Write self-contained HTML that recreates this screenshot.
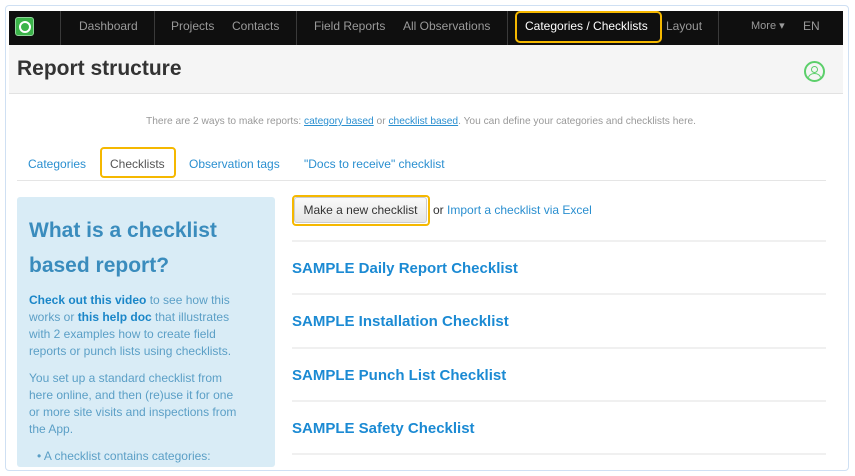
<!DOCTYPE html>
<html><head><meta charset="utf-8"><style>
*{margin:0;padding:0;box-sizing:border-box}
body{width:855px;height:476px;background:#fff;font-family:"Liberation Sans",Arial,sans-serif;position:relative;overflow:hidden}
.frame{position:absolute;left:5px;top:5px;width:844px;height:466px;border:1.5px solid #cfe0f3;border-radius:4px}
.nav{position:absolute;left:9px;top:11px;width:834px;height:34px;background:#0f0f0f}
.nav span{position:absolute;top:8px;font-size:12px;color:#9a9a9a}
.sep{position:absolute;top:0;width:1px;height:34px;background:#3a3a3a}
.hdr{position:absolute;left:9px;top:45px;width:834px;height:49px;background:#f5f5f5;border-bottom:1px solid #e2e2e2}
.a{position:absolute;white-space:nowrap}
.tab{position:absolute;top:157px;font-size:12px;color:#2a8fd0}
.panel{position:absolute;left:17px;top:197px;width:258px;height:270px;background:#d9ecf6;border-radius:3px}
.panel p{font-size:12px;line-height:17px;color:#5b9fc6}
.panel b{color:#1a86c8}
.li{position:absolute;left:292px;font-size:15px;font-weight:bold;color:#1b8ad3}
.hr{position:absolute;left:292px;width:534px;height:2px;background:#f0f0f0}
.y{border:2px solid #f5b800;border-radius:4px;position:absolute}
</style></head><body>
<div class="frame"></div>
<div class="nav">
<div style="position:absolute;left:6px;top:6px;width:19px;height:19px;background:#3cb44a;border-radius:3px;border:1px solid #8fd69a"><div style="position:absolute;left:2.5px;top:2.5px;width:12px;height:12px;border:2px solid #fff;border-radius:50%"></div></div>
<div class="sep" style="left:51px"></div><div class="sep" style="left:145px"></div><div class="sep" style="left:287px"></div><div class="sep" style="left:498px"></div><div class="sep" style="left:709px"></div>
<span style="left:70px">Dashboard</span>
<span style="left:162px">Projects</span>
<span style="left:223px">Contacts</span>
<span style="left:305px">Field Reports</span>
<span style="left:394px">All Observations</span>
<span style="left:516px;color:#fff">Categories / Checklists</span>
<span style="left:657px">Layout</span>
<span style="left:742px;font-size:11px;top:8px">More ▾</span>
<span style="left:794px;font-size:12px">EN</span>
</div>
<div class="y" style="left:515px;top:11px;width:147px;height:32px;border-radius:5px"></div>
<div class="hdr">
<div class="a" style="left:8px;top:12px;font-size:21px;font-weight:bold;color:#333">Report structure</div>
<div style="position:absolute;left:795px;top:16px;width:21px;height:21px;border:2px solid #5bcf6a;border-radius:50%;overflow:hidden"><div style="position:absolute;left:5px;top:3px;width:7px;height:7px;border:1.6px solid #5bcf6a;border-radius:50%"></div><div style="position:absolute;left:2px;top:10px;width:13px;height:10px;border:1.6px solid #5bcf6a;border-radius:50% 50% 0 0"></div></div>
</div>
<div class="a" style="left:0;width:842px;text-align:center;top:116px;font-size:10.2px;color:#999">There are 2 ways to make reports: <u style="color:#2a8fd0">category based</u> or <u style="color:#2a8fd0">checklist based</u>. You can define your categories and checklists here.</div>
<div class="tab" style="left:28px">Categories</div>
<div class="tab" style="left:110px;color:#555">Checklists</div>
<div class="tab" style="left:189px">Observation tags</div>
<div class="tab" style="left:304px">"Docs to receive" checklist</div>
<div style="position:absolute;left:17px;top:180px;width:809px;height:1px;background:#e5e5e5"></div>
<div class="y" style="left:100px;top:147px;width:76px;height:31px"></div>
<div class="panel">
<div class="a" style="left:12px;top:16px;font-size:21px;font-weight:bold;color:#3a8cbd;line-height:35px;white-space:normal;width:240px">What is a checklist based report?</div>
<div style="position:absolute;left:12px;top:95px;width:208px">
<p><b>Check out this video</b> to see how this works or <b>this help doc</b> that illustrates with 2 examples how to create field reports or punch lists using checklists.</p>
<p style="margin-top:10px">You set up a standard checklist from here online, and then (re)use it for one or more site visits and inspections from the App.</p>
<p style="margin-top:10px;padding-left:8px">• A checklist contains categories:</p>
</div></div>
<div style="position:absolute;left:294px;top:197px;width:133px;height:26px;background:linear-gradient(#fafafa,#e6e6e6);border:1px solid #ccc;border-radius:3px;font-size:12px;color:#333;text-align:center;line-height:24px">Make a new checklist</div>
<div class="y" style="left:292px;top:195px;width:138px;height:31px"></div>
<div class="a" style="left:433px;top:203px;font-size:12px;color:#333">or <span style="color:#2a8fd0">Import a checklist via Excel</span></div>
<div class="hr" style="top:240px"></div>
<div class="li" style="top:260px">SAMPLE Daily Report Checklist</div>
<div class="hr" style="top:293px"></div>
<div class="li" style="top:313px">SAMPLE Installation Checklist</div>
<div class="hr" style="top:347px"></div>
<div class="li" style="top:367px">SAMPLE Punch List Checklist</div>
<div class="hr" style="top:400px"></div>
<div class="li" style="top:420px">SAMPLE Safety Checklist</div>
<div class="hr" style="top:453px"></div>
</body></html>
